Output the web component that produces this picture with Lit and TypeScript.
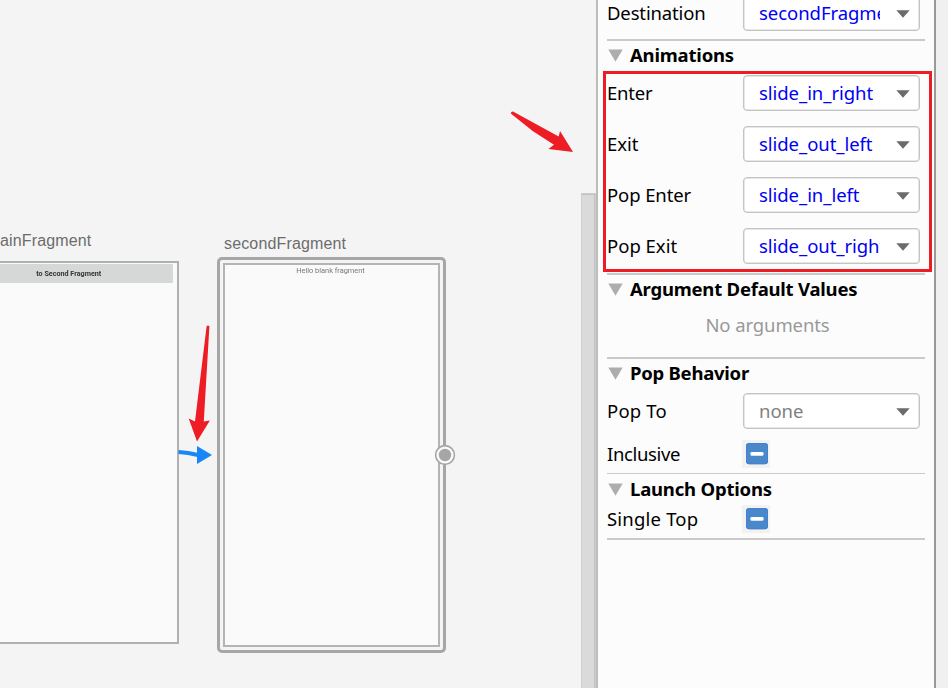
import { LitElement, html, css, svg } from "lit";
import { customElement, property } from "lit/decorators.js";
import { styleMap } from "lit/directives/style-map.js";

const textFont = css`"Noto Sans", "Open Sans", sans-serif`;

// Letter spacing in px for the labels that run wider or narrower than the default.
const tracking: Record<string, number> = {
  "Destination": -0.15,
  "Enter": -0.2,
  "Pop Enter": -0.1,
  "Pop To": 0.2,
  "Inclusive": -0.35,
  "Single Top": 0.2,
  "Animations": -0.2,
  "Argument Default Values": -0.22,
  "Pop Behavior": -0.25,
  "Launch Options": -0.2,
};
const spacing = (label: string) => styleMap({ letterSpacing: `${tracking[label] ?? 0}px` });

@customElement("combo-box")
class ComboBox extends LitElement {
  @property() value = "";
  @property({ type: Boolean }) muted = false;

  static styles = css`
    :host { display: block; width: 177px; height: 36px; flex: none; margin-left: -1px; }
    .box {
      box-sizing: border-box; width: 177px; height: 36px; display: flex; align-items: center;
      justify-content: space-between; padding: 0 9px 0 15px; background: #fff;
      border: 1px solid #c4c4c4; border-radius: 4px; box-shadow: inset 0 0 0 0.5px #cfcfcf;
    }
    .value {
      width: 121px; overflow: hidden; white-space: nowrap; font: 18.5px/34px ${textFont};
      letter-spacing: -0.05px; color: #0000f5;
    }
    .muted { color: #808080; }
    svg { display: block; flex: none; margin-top: 1px; }
  `;

  render() {
    return html`<div class="box">
      <span class="value ${this.muted ? "muted" : ""}">${this.value}</span>
      <svg width="14" height="8" viewBox="0 0 14 8"><path d="M0.3 0.3H13.7L7 7.8Z" fill="#6b6b6b" /></svg>
    </div>`;
  }
}

@customElement("tri-check")
class TriCheck extends LitElement {
  static styles = css`
    :host { display: block; width: 28px; height: 28px; background: #f2f2f2; margin-left: -2px; }
    svg { display: block; }
  `;
  render() {
    return html`<svg width="28" height="28" viewBox="0 0 28 28">
      <rect x="4" y="3" width="22" height="21.2" rx="3" fill="#4a88cc" />
      <rect x="4.5" y="3.5" width="21" height="20.2" rx="2.5" fill="none" stroke="#4580cf" />
      <rect x="8.5" y="12" width="13" height="3.7" rx="1.3" fill="#fff" />
    </svg>`;
  }
}

@customElement("section-title")
class SectionTitle extends LitElement {
  @property() label = "";
  static styles = css`
    :host { display: flex; align-items: center; height: 28px; gap: 7px; padding-left: 1px; }
    .text { font: bold 18.5px/28px ${textFont}; color: #000; white-space: nowrap; }
    svg { display: block; margin-top: 1px; }
  `;
  render() {
    return html`<svg width="15" height="13" viewBox="0 0 15 13"><path d="M0.3 0.4H14.7L7.5 12.8Z" fill="#adadad" /></svg>
      <span class="text" style=${spacing(this.label)}>${this.label}</span>`;
  }
}

const animations = [
  ["Enter", "slide_in_right"],
  ["Exit", "slide_out_left"],
  ["Pop Enter", "slide_in_left"],
  ["Pop Exit", "slide_out_right"],
];

@customElement("app-root")
class AppRoot extends LitElement {
  static styles = css`
    :host { display: block; width: 948px; height: 688px; overflow: hidden; position: relative; background: #f0f0f0; }
    .frame { display: flex; height: 688px; }
    .canvas { position: relative; width: 596px; height: 688px; background: #f4f4f4; overflow: hidden; flex: none; }
    .node-name { position: absolute; font: 16px/20px "Liberation Sans", Arial, sans-serif; color: #6c6c6c; white-space: nowrap; }
    .name-main { left: 0; top: 231px; letter-spacing: 0.15px; }
    .name-second { left: 224px; top: 234px; letter-spacing: 0.15px; }
    .main-node {
      position: absolute; left: -40px; top: 261px; width: 218.5px; height: 383px; box-sizing: border-box;
      border: 2px solid #b0b0b0; background: #fafafa;
    }
    .preview-button {
      margin: 1px 4px 0 0; height: 19px; background: #d6d8d7; text-align: center;
      font: bold 7.2px/20px Roboto, sans-serif; color: #333; border-radius: 1px; padding-left: 3px;
    }
    .soft { filter: blur(0.4px); }
    .second-node {
      position: absolute; left: 217px; top: 257px; width: 229px; height: 396px; box-sizing: border-box;
      border: 3px solid #a6a6a6; border-radius: 5px; padding: 3px; background: #f4f4f4;
    }
    .second-inner {
      box-sizing: border-box; height: 100%; border: 2px solid #b4b4b4; background: #fafafa; text-align: center;
      font: 7.4px/11px Roboto, sans-serif; color: #777; padding-right: 2px;
    }
    .scroll {
      position: absolute; right: 0; top: 193px; width: 15px; height: 500px; box-sizing: border-box;
      background: #dadada; border: 1px solid #cdcdcd; box-shadow: inset -1px 1px 0 #c2c2c2;
    }
    .overlay { position: absolute; left: 0; top: 0; pointer-events: none; }
    .panel {
      box-sizing: border-box; width: 340px; height: 688px; border-left: 2px solid #bcbcbc;
      border-right: 2px solid #999; background: #fcfcfc; padding: 0 9px; overflow: hidden;
    }
    .panel-body { margin-top: -5px; display: flex; flex-direction: column; width: 318px; }
    .row { display: flex; align-items: center; height: 36px; }
    .label { width: 137px; font: 18.5px/30px ${textFont}; color: #000; white-space: nowrap; flex: none; }
    .rule { height: 2px; background: #cacaca; flex: none; }
    .thin { height: 1px; }
    .destination { padding-bottom: 8px; }
    .animations { display: flex; flex-direction: column; gap: 15px; padding: 6px 0 9px; }
    .empty {
      height: 54px; font: 18.5px/44px ${textFont}; letter-spacing: -0.1px; color: #999;
      text-align: center; padding-left: 3px; box-sizing: border-box;
    }
    .pop { padding: 6px 0 5px; }
    .check { height: 28px; }
    .pop .check { margin-top: 11px; }
    .launch { padding: 2px 0 5px; }
    .last-title { margin-top: 1px; }
  `;

  check(label: string) {
    return html`<div class="row check"><span class="label" style=${spacing(label)}>${label}</span><tri-check></tri-check></div>`;
  }

  combo(label: string, value: string, muted = false) {
    return html`<div class="row"><span class="label" style=${spacing(label)}>${label}</span><combo-box .value=${value} .muted=${muted}></combo-box></div>`;
  }

  render() {
    return html`
      <div class="frame">
        <div class="canvas">
          <div class="node-name name-main">ainFragment</div>
          <div class="main-node"><div class="preview-button"><span class="soft">to Second Fragment</span></div></div>
          <div class="node-name name-second">secondFragment</div>
          <div class="second-node"><div class="second-inner"><span class="soft">Hello blank fragment</span></div></div>
          <div class="scroll"></div>
        </div>
        <div class="panel">
          <div class="panel-body">
            <div class="destination">${this.combo("Destination", "secondFragment")}</div>
            <div class="rule"></div>
            <section-title label="Animations"></section-title>
            <div class="animations">${animations.map(([name, value]) => this.combo(name, value))}</div>
            <div class="rule"></div>
            <section-title label="Argument Default Values"></section-title>
            <div class="empty">No arguments</div>
            <div class="rule"></div>
            <section-title label="Pop Behavior"></section-title>
            <div class="pop">
              ${this.combo("Pop To", "none", true)}
              ${this.check("Inclusive")}
            </div>
            <div class="rule thin"></div>
            <section-title class="last-title" label="Launch Options"></section-title>
            <div class="launch">${this.check("Single Top")}</div>
            <div class="rule"></div>
          </div>
        </div>
      </div>
      <svg class="overlay" width="948" height="688" viewBox="0 0 948 688">
        ${svg`
          <circle cx="445" cy="455" r="9.4" fill="#fafafa" stroke="#a6a6a6" stroke-width="1.6" />
          <circle cx="445" cy="455" r="6.2" fill="#a6a6a6" />
          <path d="M178.5 452Q188 452.5 198 455" fill="none" stroke="#1886f7" stroke-width="4" />
          <path d="M197 446L212 455L197 464Z" fill="#1886f7" />
          <path d="M206.6 326.2Q208 325 209.4 326.3L203.8 421.5L209.9 420.6L197 441.5L188.7 418.6L195 421.4Z" fill="#ee1c24" />
          <path d="M510.8 113.4Q511 111.4 513 111.6L558.7 136.6L560 131L573 152L548.4 149L554 144.8L533 131.2Z" fill="#ee1c24" />
          <rect x="604.5" y="72.5" width="326" height="198" fill="none" stroke="#ee1c24" stroke-width="3" />
        `}
      </svg>
    `;
  }
}
